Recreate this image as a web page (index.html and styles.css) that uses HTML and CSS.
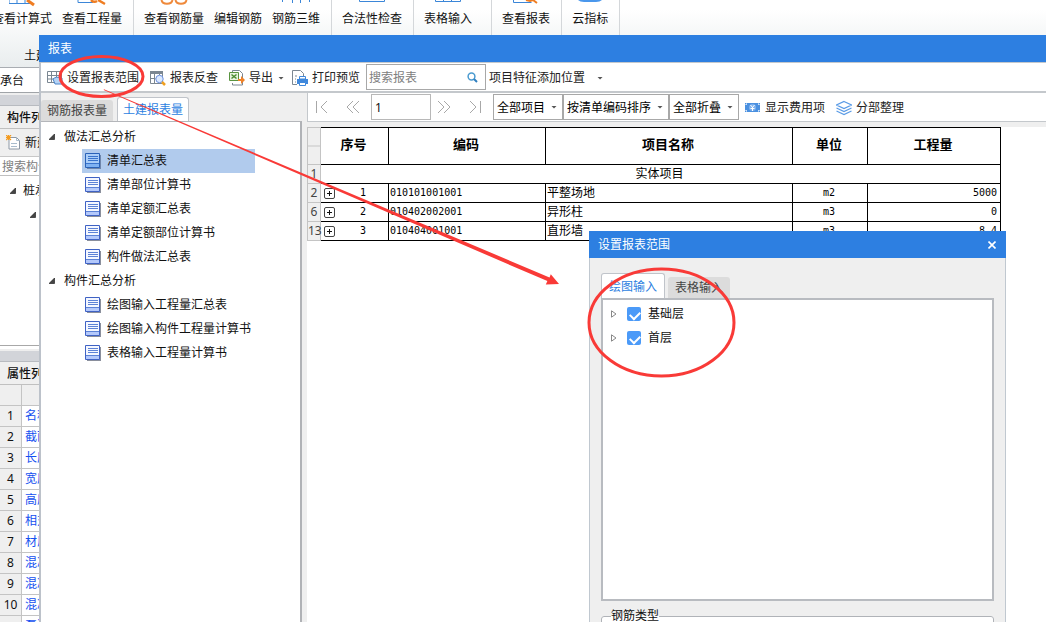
FILE: index.html
```html
<!DOCTYPE html>
<html lang="zh-CN">
<head>
<meta charset="utf-8">
<title>报表</title>
<link rel="stylesheet" href="styles.css">
</head>
<body>
<svg class="defs" width="0" height="0" aria-hidden="true">
  <symbol id="doc" viewBox="0 0 16 16">
    <path d="M2 2h14v14H2z" fill="#8a8f9c"/>
    <path d="M.5.5h14v14H.5z" fill="#f4f7ff" stroke="#3f62c4"/>
    <path d="M1 10h13v4H1z" fill="#b3c8fb"/>
    <path d="M3 3.500h10M3 5.500h10M3 7.500h10M1 10.500h13" stroke="#5c82d6" fill="none"/>
  </symbol>
  <symbol id="doc-on" viewBox="0 0 16 16">
    <path d="M2 2h14v14H2z" fill="#6f86ab"/>
    <path d="M.5.5h14v14H.5z" fill="#a9cdf8" stroke="#2a62b8"/>
    <path d="M1 10h13v4H1z" fill="#7fb2f2"/>
    <path d="M3 3.500h10M3 5.500h10M3 7.500h10M1 10.500h13" stroke="#3a74cc" fill="none"/>
  </symbol>
  <symbol id="open" viewBox="0 0 6 6"><path d="M5.500 0v5.500H0z" fill="#444" stroke="#111" stroke-width=".6"/></symbol>
  <symbol id="closed" viewBox="0 0 6 8"><path d="M.5.8v6.400L5 4z" fill="#fff" stroke="#888"/></symbol>
  <symbol id="plus" viewBox="0 0 11 11"><rect x=".5" y=".5" width="10" height="10" rx="1.500" fill="#fff" stroke="#444"/><path d="M3 5.500h5M5.500 3v5" stroke="#111"/></symbol>
</svg>

<div class="desktop">
  <header class="ribbon">
    <div class="ribbon-groups">
      <div class="group">
        <button class="tool"><svg width="26" height="8" viewBox="0 0 26 8"><path d="M0 0v3.500h24M8 0v3M16 0v3" stroke="#3b86d8" fill="none"/><path d="M18 0l7 5" stroke="#ef7d22" stroke-width="3"/></svg>查看计算式</button>
        <button class="tool"><svg width="30" height="8" viewBox="0 0 30 8"><path d="M1 0v2.500h15" stroke="#3b86d8" fill="none"/><path d="M14 0q3 3 6 1M21 0l7 4" stroke="#ef7d22" fill="none" stroke-width="2.500"/></svg>查看工程量</button>
      </div>
      <div class="group">
        <button class="tool"><svg width="28" height="8" viewBox="0 0 28 8"><path d="M1.500 0c1 5 10 5 11 0M15.500 0c1 5 10 5 11 0" stroke="#ef8a3c" fill="none" stroke-width="2"/></svg>查看钢筋量</button>
        <button class="tool"><svg width="28" height="8"></svg>编辑钢筋</button>
        <button class="tool"><svg width="28" height="8" viewBox="0 0 28 8"><path d="M.5 0v2M10.500 0v3M18.500 0v3M27.500 0v2" stroke="#3b86d8"/></svg>钢筋三维</button>
      </div>
      <div class="group">
        <button class="tool"><svg width="26" height="8" viewBox="0 0 26 8"><path d="M.5 0v1.500h25V0" stroke="#3b86d8" fill="none"/></svg>合法性检查</button>
      </div>
      <div class="group roomy">
        <button class="tool"><svg width="26" height="8" viewBox="0 0 26 8"><path d="M.5 0v1.500h25V0M8.500 0v2M16.500 0v2" stroke="#3b86d8" fill="none"/></svg>表格输入</button>
      </div>
      <div class="group">
        <button class="tool"><svg width="26" height="8" viewBox="0 0 26 8"><path d="M.5 0v2.500h18" stroke="#3b86d8" fill="none"/><path d="M13 0l4 1 3-1 4 3" stroke="#ef7d22" fill="none" stroke-width="2"/></svg>查看报表</button>
      </div>
      <div class="group">
        <button class="tool"><svg width="26" height="8" viewBox="0 0 26 8"><path d="M1 0q2 2 6 2h12q4 0 6-2z" fill="#4a97ec"/></svg>云指标</button>
      </div>
    </div>
    <div class="group-title">土建</div>
  </header>

  <aside class="side">
    <div class="combo">承台</div>
    <div class="band"></div>
    <h2 class="side-head">构件列表</h2>
    <button class="new"><svg width="16" height="15" viewBox="0 0 16 15"><path d="M3 2.500h7.500l3 3V14H3z" fill="#fff" stroke="#8d98a5"/><path d="M10.500 2.500v3h3M5 8.500h6M5 11.500h6" fill="none" stroke="#a9bccd"/><path d="M0 0l5 5M5 0L0 5M2.500 0v5M0 2.500h5" stroke="#f39a1e" stroke-width="1.200"/></svg>新建</button>
    <input class="side-search" type="text" placeholder="搜索构件..." aria-label="搜索构件">
    <ul class="side-tree">
      <li><svg width="6" height="6"><use href="#open"/></svg>桩承台</li>
      <li class="deep"><svg width="6" height="6"><use href="#open"/></svg></li>
    </ul>
    <div class="band"></div>
    <h2 class="side-head">属性列表</h2>
    <table class="props">
      <tr><th></th><td class="blank"></td></tr>
      <tr><th>1</th><td>名称</td></tr>
      <tr><th>2</th><td>截面</td></tr>
      <tr><th>3</th><td>长度</td></tr>
      <tr><th>4</th><td>宽度</td></tr>
      <tr><th>5</th><td>高度</td></tr>
      <tr><th>6</th><td>相对</td></tr>
      <tr><th>7</th><td>材质</td></tr>
      <tr><th>8</th><td>混凝</td></tr>
      <tr><th>9</th><td>混凝</td></tr>
      <tr><th>10</th><td>混凝</td></tr>
      <tr><th></th><td>泵送</td></tr>
    </table>
  </aside>

  <main class="report">
    <h1 class="title">报表</h1>
    <div class="bar">
      <button class="act"><svg width="16" height="16" viewBox="0 0 16 16"><path d="M.5 1.500h14v11H.5z" fill="#fff" stroke="#7b8792"/><path d="M.5 5.500h14M.5 9H8M4.500 1v11M9.500 1v6" stroke="#7b8792"/><path d="M6 9q3-3 9-1v6H8z" fill="#b5d3f5" stroke="#4a84c8"/></svg>设置报表范围</button>
      <button class="act"><svg width="16" height="16" viewBox="0 0 16 16"><path d="M.5 1.500h12v12H.5z" fill="#fff" stroke="#7b8792"/><path d="M0 1h13v3H0z" fill="#7b8792"/><path d="M4.500 1v12M.5 8.500h5M9.500 1v4" stroke="#7b8792"/><circle cx="9.500" cy="9" r="3.700" fill="#dceafe" stroke="#6a8fe0"/><path d="M12 12l3 3" stroke="#f0a020" stroke-width="2.500"/></svg>报表反查</button>
      <button class="act drop"><svg width="16" height="16" viewBox="0 0 16 16"><path d="M3.500 2V.5h7l3 3V15h-10v-2" fill="#fff" stroke="#7b8792"/><path d="M.5 2.500h9v8h-9z" fill="#e8f3e0" stroke="#5a9440"/><path d="M2.500 4.500l5 4M7.500 4.500l-5 4" stroke="#4a8c30" stroke-width="1.500"/><path d="M9 9h3V6l4 4-4 4v-3H9z" fill="#f08228"/></svg>导出<i class="caret"></i></button>
      <button class="act"><svg width="16" height="16" viewBox="0 0 16 16"><path d="M5 14.500H.5V.5h8l3 3V6" fill="#fff" stroke="#7b8792"/><path d="M3 6h2M3 9h1M3 12h1" stroke="#7b8792"/><path d="M5 9h11v5H5z" fill="#3f88dc"/><path d="M7.500 6.500h6V9h-6zM7.500 12.500h6v3h-6z" fill="#fff" stroke="#3f88dc"/></svg>打印预览</button>
      <label class="search"><input type="text" placeholder="搜索报表" aria-label="搜索报表"><svg width="11" height="11" viewBox="0 0 11 11"><circle cx="4.500" cy="4.500" r="3.400" fill="#fff" stroke="#4b9bd0" stroke-width="1.500"/><path d="M7 7l3 3" stroke="#2f7fc0" stroke-width="2"/></svg></label>
      <button class="act wide">项目特征添加位置<i class="caret"></i></button>
    </div>

    <div class="work">
      <section class="nav">
        <div class="tabs">
          <button class="tab">钢筋报表量</button>
          <button class="tab on">土建报表量</button>
        </div>
        <ul class="tree">
          <li><button class="branch"><svg width="6" height="6"><use href="#open"/></svg>做法汇总分析</button>
            <ul>
              <li><button class="leaf on"><svg width="16" height="16"><use href="#doc-on"/></svg>清单汇总表</button></li>
              <li><button class="leaf"><svg width="16" height="16"><use href="#doc"/></svg>清单部位计算书</button></li>
              <li><button class="leaf"><svg width="16" height="16"><use href="#doc"/></svg>清单定额汇总表</button></li>
              <li><button class="leaf"><svg width="16" height="16"><use href="#doc"/></svg>清单定额部位计算书</button></li>
              <li><button class="leaf"><svg width="16" height="16"><use href="#doc"/></svg>构件做法汇总表</button></li>
            </ul>
          </li>
          <li><button class="branch"><svg width="6" height="6"><use href="#open"/></svg>构件汇总分析</button>
            <ul>
              <li><button class="leaf"><svg width="16" height="16"><use href="#doc"/></svg>绘图输入工程量汇总表</button></li>
              <li><button class="leaf"><svg width="16" height="16"><use href="#doc"/></svg>绘图输入构件工程量计算书</button></li>
              <li><button class="leaf"><svg width="16" height="16"><use href="#doc"/></svg>表格输入工程量计算书</button></li>
            </ul>
          </li>
        </ul>
      </section>

      <section class="view">
        <div class="pager">
          <button class="step" aria-label="首页"><svg width="14" height="14" viewBox="0 0 14 14"><path d="M1.500 1v12M12 1L6 7l6 6"/></svg></button>
          <button class="step" aria-label="上一页"><svg width="14" height="14" viewBox="0 0 14 14"><path d="M7 1L1 7l6 6M13 1L7 7l6 6"/></svg></button>
          <input class="page" type="text" value="1" aria-label="页码">
          <button class="step" aria-label="下一页"><svg width="14" height="14" viewBox="0 0 14 14"><path d="M1 1l6 6-6 6M7 1l6 6-6 6"/></svg></button>
          <button class="step" aria-label="末页"><svg width="14" height="14" viewBox="0 0 14 14"><path d="M2 1l6 6-6 6M12.500 1v12"/></svg></button>
          <div class="picks">
            <label class="pick"><select aria-label="项目"><option>全部项目</option></select><i class="caret"></i></label>
            <label class="pick"><select aria-label="排序"><option>按清单编码排序</option></select><i class="caret"></i></label>
            <label class="pick"><select aria-label="折叠"><option>全部折叠</option></select><i class="caret"></i></label>
          </div>
          <button class="act"><svg width="16" height="16" viewBox="0 0 16 16"><path d="M0 3h15v9H0z" fill="#4a90e0"/><path d="M1 5V4h1M13 4h1v1M1 10v1h1M13 11h1v-1" stroke="#fff" fill="none"/><circle cx="7.500" cy="7.500" r="3.500" fill="#7fb2ee"/><path d="M5.500 5l2 2.500 2-2.500M7.500 7v4M5.500 8.500h4" stroke="#fff" fill="none"/></svg>显示费用项</button>
          <button class="act"><svg width="16" height="16" viewBox="0 0 16 16"><path d="M8 1.500l7.500 3.500L8 8.500.5 5zM.5 8L8 11.500 15.500 8M.5 11L8 14.500 15.500 11" fill="none" stroke="#5a9be6" stroke-width="1.200"/></svg>分部整理</button>
        </div>
        <div class="paper">
          <table class="sheet">
            <colgroup><col class="c0"><col class="c1"><col class="c2"><col class="c3"><col class="c4"><col class="c5"></colgroup>
            <thead>
              <tr><td class="no split"></td><th>序号</th><th>编码</th><th>项目名称</th><th>单位</th><th>工程量</th></tr>
            </thead>
            <tbody>
              <tr><td class="no">1</td><td colspan="5" class="sect">实体项目</td></tr>
              <tr><td class="no">2</td><td><div class="seq"><button class="exp" aria-label="展开"><svg width="11" height="11"><use href="#plus"/></svg></button><span>1</span></div></td><td>010101001001</td><td class="name">平整场地</td><td class="mid">m2</td><td class="num">5000</td></tr>
              <tr><td class="no">6</td><td><div class="seq"><button class="exp" aria-label="展开"><svg width="11" height="11"><use href="#plus"/></svg></button><span>2</span></div></td><td>010402002001</td><td class="name">异形柱</td><td class="mid">m3</td><td class="num">0</td></tr>
              <tr><td class="no">13</td><td><div class="seq"><button class="exp" aria-label="展开"><svg width="11" height="11"><use href="#plus"/></svg></button><span>3</span></div></td><td>010404001001</td><td class="name">直形墙</td><td class="mid">m3</td><td class="num">8.4</td></tr>
            </tbody>
          </table>
        </div>
      </section>
    </div>
  </main>

  <section class="dialog" role="dialog" aria-labelledby="dlg">
    <header class="title"><span id="dlg">设置报表范围</span><button class="close" aria-label="关闭"><svg width="8" height="8" viewBox="0 0 8 8"><path d="M.5.500l7 7M7.500.500l-7 7" stroke="#fff" stroke-width="1.600"/></svg></button></header>
    <div class="dialog-body">
      <div class="tabs">
        <button class="tab on">绘图输入</button>
        <button class="tab">表格输入</button>
      </div>
      <ul class="floors">
        <li><svg width="6" height="8"><use href="#closed"/></svg><label><input type="checkbox" checked>基础层</label></li>
        <li><svg width="6" height="8"><use href="#closed"/></svg><label><input type="checkbox" checked>首层</label></li>
      </ul>
      <fieldset class="kinds"><legend>钢筋类型</legend></fieldset>
    </div>
  </section>

  <svg class="marks" width="760" height="400" viewBox="0 0 760 400" aria-hidden="true">
    <ellipse cx="101.500" cy="76.500" rx="41.500" ry="20" fill="none" stroke="#f93a37" stroke-width="3"/>
    <ellipse cx="661.500" cy="322.500" rx="72.500" ry="53.500" fill="none" stroke="#f93a37" stroke-width="3"/>
    <path d="M104 89.300L549.500 277.400l1.300-3.200L559 284l-13.200.6 1.600-3.500L103.700 90z" fill="#f93a37"/>
  </svg>
</div>
</body>
</html>
```

FILE: styles.css
```css
* { box-sizing: border-box; }

body {
  margin: 0;
  font: 12px/16px "Noto Sans", "Noto Sans CJK SC", sans-serif;
  color: #111;
}

button, input, select { font: inherit; color: inherit; }

button {
  display: flex;
  align-items: center;
  padding: 0;
  border: 0;
  background: none;
  white-space: nowrap;
}

ul { margin: 0; padding: 0; list-style: none; }
h1, h2 { margin: 0; font-size: 12px; font-weight: 400; }
svg { display: block; flex: none; }
input::placeholder { color: #808080; opacity: 1; }

.defs { position: absolute; }

.desktop {
  position: relative;
  height: 100vh;
  overflow: hidden;
  background: #fff;
}

/* Ribbon behind the report window */
.ribbon {
  height: 68px;
  background: linear-gradient(#fff 10px, #e9edee);
  border-bottom: 1px solid #a9adb2;
}
.ribbon-groups { display: flex; height: 45px; margin-left: -18px; }
.group {
  display: flex;
  gap: 10px;
  padding: 0 11px 0 10px;
  border-right: 1px solid #d4d7da;
}
.group.roomy { padding-right: 19px; }
.tool { flex-direction: column; gap: 3px; height: 27px; }
.group-title { padding: 3px 24px; }

/* Component list and property list */
.side { width: 60px; white-space: nowrap; }
.combo { height: 25px; padding: 5px 0; border-bottom: 1px solid #a0a4a8; }
.band {
  height: 13px;
  background: #d2d4d9;
  border-top: 2px solid #eee;
  border-bottom: 1px solid #b8bbc0;
}
.side-head {
  height: 23px;
  padding: 4px 7px;
  background: #efefef;
  border-bottom: 1px solid #c0c0c0;
  font-weight: 500;
}
.new {
  gap: 3px;
  width: 100%;
  height: 28px;
  padding-left: 6px;
  background: #efefef;
  border-bottom: 1px solid #c8c8c8;
}
.side-search {
  display: block;
  width: 80px;
  height: 19px;
  padding: 0 2px;
  border: 0;
  border-bottom: 1px solid #c0c0c0;
}
.side-tree {
  height: 170px;
  margin-bottom: 3px;
  padding-top: 3px;
  border-bottom: 1px solid #a8a8a8;
}
.side-tree li { display: flex; align-items: center; gap: 7px; height: 24px; padding-left: 10px; }
.side-tree .deep { padding-left: 30px; }

.props { width: 100%; border-spacing: 0; table-layout: fixed; }
.props th, .props td {
  height: 21px;
  padding: 0;
  border-bottom: 1px solid #c4c4c4;
}
.props th { width: 22px; background: #efefef; border-right: 1px solid #c4c4c4; font-weight: 400; }
.props td { padding-left: 3px; color: #1450f0; }
.props .blank { background: #efefef; }

/* Report window */
.report {
  position: absolute;
  inset: 35px 0 0 39px;
  display: flex;
  flex-direction: column;
  border-left: 2px solid #bcc2ca;
  background: #efefef;
}
.title {
  display: flex;
  align-items: center;
  justify-content: space-between;
  height: 27px;
  padding: 0 7px;
  background: #2d7fe1;
  color: #fff;
  flex: none;
}
.report > .title { margin-left: -2px; padding-left: 9px; }

.bar {
  display: flex;
  align-items: center;
  height: 31px;
  padding: 0 6px;
  border-top: 1px solid #c4c8cc;
  border-bottom: 2px solid #c4c8cc;
  background: #fff;
}
.act { gap: 4px; margin-right: 11px; padding-top: 2px; color: #222; }
.act.drop { margin-right: 8px; }
.caret {
  width: 6px;
  height: 3px;
  background: #555;
  clip-path: polygon(0 0, 100% 0, 50% 100%);
}
.act .caret { margin-left: 1px; }
.act + .search { margin-left: -5px; }
.wide { gap: 11px; margin-left: 3px; }
.search {
  display: flex;
  align-items: center;
  width: 120px;
  height: 26px;
  padding: 0 7px 0 2px;
  border: 1px solid #a8a8a8;
}
.search input { flex: 1; min-width: 0; padding: 1px 0 0; border: 0; outline: 0; }

.work { display: flex; flex: 1; min-height: 0; }
.nav { display: flex; flex-direction: column; width: 261px; padding-top: 4px; }
.tabs { display: flex; align-items: flex-end; gap: 3px; }
.tab {
  justify-content: center;
  height: 21px;
  padding: 0 6px;
  border-radius: 3px 3px 0 0;
  background: #dcdcdc;
  color: #444;
}
.tab.on {
  height: 24px;
  padding: 0 5px;
  border: 1px solid #c0c4ca;
  border-bottom: 0;
  background: #fff;
  color: #2d7fe1;
}
.nav .tabs { gap: 4px; }
.tree {
  flex: 1;
  padding: 3px 0;
  border-top: 1px solid #b4b6ba;
  border-right: 2px solid #b0b2b6;
  background: #fff;
}
.branch { gap: 9px; height: 24px; padding-left: 8px; }
.leaf { gap: 6px; width: 173px; height: 24px; margin-left: 41px; padding-left: 3px; }
.leaf.on { background: #b1cbed; }

.view { display: flex; flex: 1; flex-direction: column; min-width: 0; margin-left: 5px; }
.pager {
  display: flex;
  align-items: center;
  height: 29px;
  padding-left: 7px;
  border-left: 1px solid #c4c8cc;
  border-bottom: 1px solid #c4c8cc;
  background: #fff;
}
.step { justify-content: center; width: 14px; height: 24px; margin-right: 17px; }
.step svg { fill: none; stroke: #a8a8a8; }
.page {
  width: 60px;
  height: 26px;
  margin: 0 6px 0 -6px;
  padding: 0 3px;
  border: 1px solid #b8b8b8;
  outline: 0;
}
.picks { display: flex; margin: 0 6px 0 -6px; }
.pick { display: grid; align-items: center; height: 26px; border: 1px solid #a8a8a8; }
.pick select, .pick .caret { grid-area: 1 / 1; }
.pick select {
  appearance: none;
  height: 24px;
  padding: 1px 16px 0 3px;
  border: 0;
  background: #fff;
  color: #000;
}
.pick .caret { justify-self: end; margin-right: 5px; pointer-events: none; }

.paper { flex: 1; margin-top: 5px; background: #fff; }
.sheet {
  width: 694px;
  border-collapse: collapse;
  table-layout: fixed;
  font: 10px/16px "DejaVu Sans Mono", "Noto Sans CJK SC", monospace;
  color: #000;
}
.c0 { width: 13px; }
.c1 { width: 68px; }
.c2 { width: 157px; }
.c3 { width: 247px; }
.c4 { width: 75px; }
.c5 { width: 133px; }
.sheet th, .sheet td { height: 19px; padding: 0 3px 0 1px; border: 1px solid #000; white-space: nowrap; }
.sheet th { height: 37px; padding-bottom: 2px; font-size: 13px; font-weight: 700; }
.sheet .no {
  padding: 0;
  border-color: #c4c4c4;
  background: #efefef;
  color: #444;
  font: 12px/16px "Noto Sans", sans-serif;
  text-align: center;
}
.sheet .split { background: linear-gradient(#efefef 17px, #c4c4c4 17px, #c4c4c4 18px, #efefef 18px); }
.sheet .sect { font-size: 12px; text-align: center; }
.sheet .name { font-size: 12px; }
.sheet .mid { text-align: center; }
.sheet .num { text-align: right; }
.seq { display: flex; align-items: center; }
.seq span { flex: 1; padding-left: 6px; text-align: center; }
.exp { margin-left: 2px; }

/* Range dialog */
.dialog {
  position: absolute;
  inset: 231px 40px 0 589px;
  display: flex;
  flex-direction: column;
  background: #efefef;
}
.dialog .title { padding: 0 10px 0 9px; }
.dialog-body {
  flex: 1;
  padding: 15px 11px 0;
  border: 1px solid #c0c8d0;
  border-width: 0 1px;
}
.dialog .tab { padding: 0 7px; }
.dialog .tab.on { height: 25px; padding-top: 2px; }
.floors {
  height: 303px;
  padding-top: 2px;
  border: 2px solid #b8bbc0;
  background: #fff;
}
.floors li { display: flex; align-items: center; gap: 10px; height: 24px; padding-left: 8px; }
.floors label { display: flex; align-items: center; gap: 7px; }
.floors input {
  appearance: none;
  width: 14px;
  height: 14px;
  margin: 0;
  border-radius: 2px;
  background: #4b9af8;
}
.floors input:checked::before {
  content: "";
  display: block;
  width: 8px;
  height: 5px;
  margin: 4px 3px;
  border: solid #fff;
  border-width: 0 0 2px 2px;
  transform: rotate(-45deg);
}
.kinds {
  height: 40px;
  margin: 7px 0 0;
  padding: 0;
  border: 1px solid #b0b3b8;
  border-radius: 3px;
  background: #fff;
}
.kinds legend { margin-left: 9px; padding: 0; }

/* Red call-outs drawn over the windows */
.marks { position: absolute; top: 0; left: 0; pointer-events: none; }
```
